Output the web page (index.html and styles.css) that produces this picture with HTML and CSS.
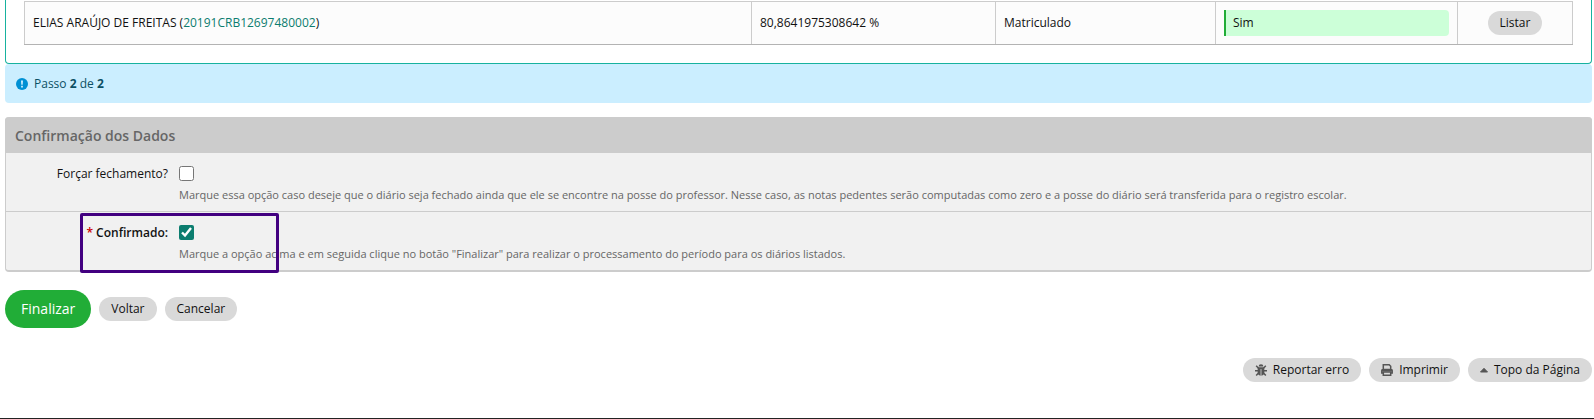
FILE: index.html
```html
<!DOCTYPE html>
<html lang="pt-br">

<head>
  <meta charset="UTF-8">
  <meta name="viewport" content="width=device-width, initial-scale=1.0">
  <title>Confirmação dos Dados</title>
  <link rel="stylesheet" href="styles.css">
</head>

<body>
  <main class="content">
    <div class="box">
      <table class="students">
        <colgroup>
          <col>
          <col class="col-frequency">
          <col class="col-status">
          <col class="col-closed">
          <col class="col-actions">
        </colgroup>
        <tbody>
          <tr>
            <td>ELIAS ARAÚJO DE FREITAS (<a href="#">20191CRB12697480002</a>)</td>
            <td>80,8641975308642 %</td>
            <td>Matriculado</td>
            <td><div class="status-success">Sim</div></td>
            <td class="actions"><a class="btn" href="#">Listar</a></td>
          </tr>
        </tbody>
      </table>
    </div>

    <p class="msg-info">
      <svg class="icon-info" viewBox="0 0 12 12" aria-hidden="true">
        <circle cx="6" cy="6" r="6" fill="#0090d4" />
        <path d="M5 2.500h2l-.3 4.300H5.300zM5.100 7.800h1.800v1.700H5.100z" fill="#cbeeff" />
      </svg>
      <span>Passo <strong>2</strong> de <strong>2</strong></span>
    </p>

    <form id="form" action="#">
      <section class="module">
        <h2>Confirmação dos Dados</h2>
        <div class="form-row">
          <label for="forcar">Forçar fechamento?</label>
          <div class="field">
            <input id="forcar" type="checkbox">
            <p class="help">Marque essa opção caso deseje que o diário seja fechado ainda que ele se encontre na posse do professor. Nesse caso, as notas pedentes serão computadas como zero e a posse do diário será transferida para o registro escolar.</p>
          </div>
        </div>
        <div class="form-row">
          <label class="required" for="confirmado">Confirmado:</label>
          <div class="field">
            <input id="confirmado" type="checkbox" checked>
            <p class="help">Marque a opção acima e em seguida clique no botão "Finalizar" para realizar o processamento do período para os diários listados.</p>
          </div>
          <div class="highlight"></div>
        </div>
      </section>

      <div class="submit-row">
        <button class="btn btn-success" type="submit">Finalizar</button>
        <button class="btn" type="button">Voltar</button>
        <a class="btn" href="#">Cancelar</a>
      </div>
    </form>

    <div class="page-tools">
      <button class="btn" type="button">
        <svg class="icon" viewBox="0 0 12 12" aria-hidden="true">
          <path d="M3.600 2.600a2.400 2.400 0 0 1 4.800 0z" fill="#555" />
          <path d="M2.700 3.200h6.600v5.400a3.300 3.300 0 0 1-2.900 3.200V5h-.8v6.800A3.300 3.300 0 0 1 2.700 8.600z" fill="#555" />
          <path d="M1.200 1.800l2.300 2.400M10.800 1.800L8.500 4.200M0 6.700h3.300M12 6.700H8.700M1.200 11.500l2.300-2.600M10.800 11.500L8.500 8.900" fill="none" stroke="#555" stroke-width="1.500" />
        </svg>
        Reportar erro
      </button>
      <button class="btn" type="button">
        <svg class="icon" viewBox="0 0 12 12" aria-hidden="true">
          <path d="M2.300 5.500V.8h5.900l1.500 1.500v3.200M2.300 9H.8V6.500q0-1 1-1h8.400q1 0 1 1V9H9.700" fill="none" stroke="#555" stroke-width="1.500" />
          <path d="M2.300 8h7.400v3.200H2.300z" fill="none" stroke="#555" stroke-width="1.500" />
          <path d="M1 5.500h10v2H1z" fill="#555" />
        </svg>
        Imprimir
      </button>
      <a class="btn" href="#">
        <svg class="icon-up" viewBox="0 0 8 12" aria-hidden="true">
          <path d="M.5 8h7L4 4.300z" fill="#555" stroke="#555" stroke-linejoin="round" />
        </svg>
        Topo da Página
      </a>
    </div>
  </main>
  <footer class="footer"></footer>
</body>

</html>
```

FILE: styles.css
```css
* {
  margin: 0;
  padding: 0;
  box-sizing: border-box;
}

body {
  background: #fff;
  color: #111;
  font-family: "Open Sans", sans-serif;
  font-size: 12px;
  line-height: 18px;
}

a {
  color: #0c7d6f;
  text-decoration: none;
}

.content {
  padding: 0 2px 0 5px;
}

/* tabela de alunos */
.box {
  padding: 1px 18px 18px;
  border: 1px solid #17b29f;
  border-top: 0;
  border-radius: 0 0 4px 4px;
}

.students {
  width: 100%;
  table-layout: fixed;
  border-collapse: collapse;
  background: #fcfcfc;
}

.students td {
  height: 43px;
  padding: 8px;
  border: 1px solid #ccc;
  border-bottom-color: #b3b3b3;
}

.col-frequency {
  width: 244px;
}

.col-status {
  width: 220px;
}

.col-closed {
  width: 242px;
}

.col-actions {
  width: 115px;
}

.students .actions {
  text-align: center;
}

.status-success {
  padding: 4px 7px;
  background: #ccffd8;
  border-left: 2px solid #21ad37;
  border-radius: 0 4px 4px 0;
}

.msg-info {
  display: flex;
  align-items: center;
  gap: 6px;
  height: 39px;
  margin-bottom: 14px;
  padding: 0 11px;
  background: #cbeeff;
  border-radius: 4px;
  color: #0c5064;
}

.icon-info {
  width: 12px;
  height: 12px;
}

/* formulario */
.module {
  background: #f1f1f1;
  border: 1px solid #ccc;
  border-top: 0;
  border-bottom-width: 2px;
  border-radius: 4px;
}

.module h2 {
  margin: 0 -1px;
  padding: 9px 10px 7px;
  background: #ccc;
  border-radius: 4px 4px 0 0;
  color: #666;
  font-size: 14px;
  font-weight: 600;
  line-height: 20px;
}

.form-row {
  position: relative;
  display: flex;
  gap: 11px;
  padding: 12px 0 7px;
}

.form-row + .form-row {
  border-top: 1px solid #ccc;
}

.form-row > label {
  width: 162px;
  text-align: right;
}

.form-row .required {
  font-weight: 600;
}

.required::before {
  content: "* ";
  color: #c00;
}

.field input {
  display: block;
  width: 15px;
  height: 15px;
  margin: 1px 0 5px;
  accent-color: #0c7d6f;
}

.help {
  color: #666;
  font-size: 11px;
}

.highlight {
  position: absolute;
  top: 1px;
  left: 74px;
  width: 199px;
  height: 60px;
  border: 3px solid #420080;
  border-radius: 2px;
  pointer-events: none;
}

/* botoes */
.btn {
  display: inline-flex;
  align-items: center;
  gap: 6px;
  height: 24px;
  padding: 0 12px;
  background: #d9d9d9;
  border: 0;
  border-radius: 20px;
  color: #111;
  font-family: inherit;
  font-size: 12px;
  line-height: 18px;
  vertical-align: middle;
  cursor: pointer;
}

.btn-success {
  height: 38px;
  padding: 0 16px;
  background: #21ad37;
  color: #fff;
  font-size: 14px;
}

.submit-row {
  display: flex;
  align-items: center;
  gap: 8px;
  margin-top: 18px;
}

.page-tools {
  display: flex;
  justify-content: flex-end;
  gap: 8px;
  padding: 30px 0 36px;
}

.icon {
  width: 12px;
  height: 12px;
}

.icon-up {
  width: 8px;
  height: 12px;
}

.footer {
  border-top: 1px solid #222;
}
```
